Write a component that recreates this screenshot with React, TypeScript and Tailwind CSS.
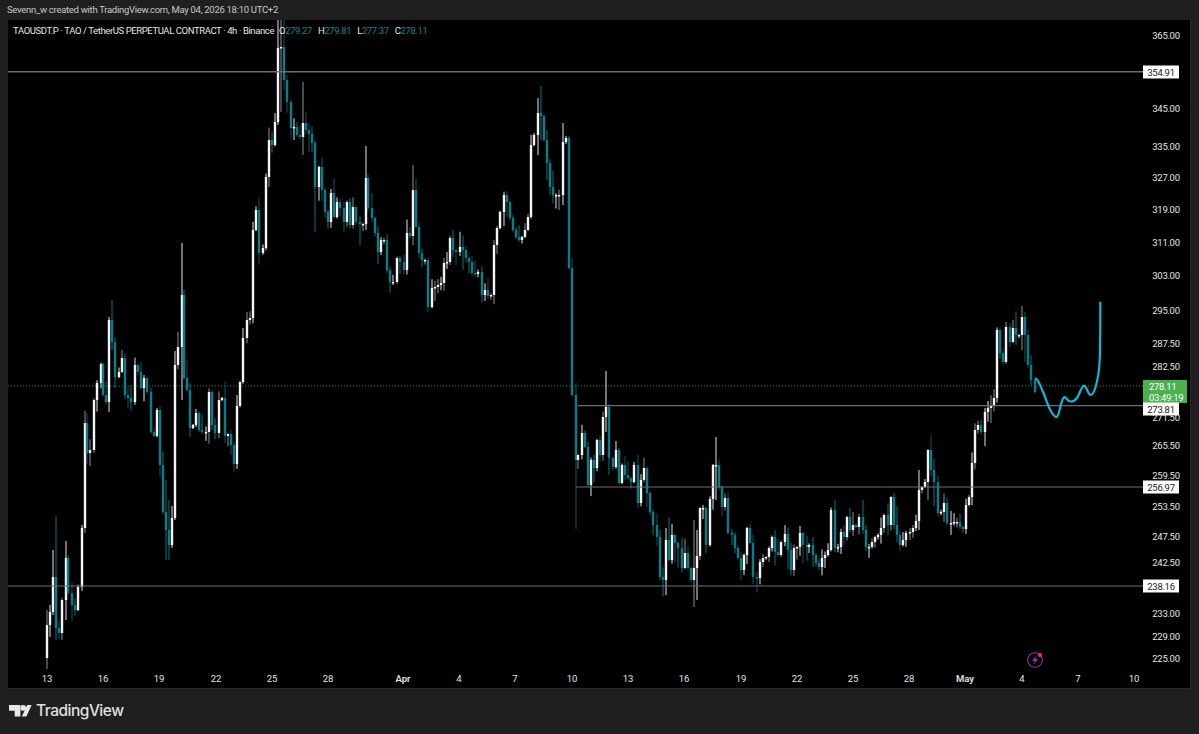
const FONT = "font-['Roboto',sans-serif]";

// candle closes as [x, y] in page pixels, read off the picture
const CLOSES: [number, number][] = [
  [47, 625], [50, 612], [53, 577], [56, 628], [59, 633], [62, 600], [66, 558], [68, 593], [72, 605], [75, 610],
  [78, 587], [82, 528], [85, 423], [87, 453], [90, 450], [94, 400], [97, 383], [101, 364], [103, 395], [106, 402],
  [109, 320], [112, 342], [115, 377], [119, 372], [122, 358], [125, 395], [128, 398], [131, 402], [135, 365], [138, 372],
  [141, 388], [144, 378], [147, 392], [151, 432], [154, 436], [157, 410], [160, 465], [163, 512], [166, 530], [169, 545],
  [172, 518], [175, 365], [178, 347], [182, 295], [184, 378], [187, 390], [190, 428], [193, 425], [196, 413], [199, 430],
  [202, 432], [206, 432], [209, 392], [212, 425], [215, 433], [219, 400], [222, 398], [225, 436], [228, 434], [231, 445],
  [234, 464], [237, 406], [240, 382], [243, 338], [247, 320], [250, 318], [253, 230], [256, 210], [259, 253], [263, 248],
  [266, 177], [269, 140], [272, 145], [275, 122], [278, 48], [281, 47], [284, 80], [287, 102], [291, 128], [294, 127],
  [297, 135], [300, 137], [303, 123], [306, 130], [309, 134], [312, 143], [315, 187], [319, 167], [322, 190], [325, 212],
  [328, 222], [331, 193], [334, 217], [337, 202], [340, 208], [344, 222], [347, 202], [350, 225], [353, 207], [356, 222],
  [360, 224], [363, 224], [366, 178], [368, 208], [372, 218], [375, 233], [378, 252], [381, 240], [384, 240], [387, 270],
  [390, 282], [393, 282], [397, 258], [400, 262], [404, 270], [407, 233], [410, 236], [413, 190], [416, 227], [419, 253],
  [422, 260], [425, 260], [428, 307], [432, 288], [435, 287], [438, 285], [441, 283], [444, 263], [447, 262], [450, 238],
  [453, 250], [456, 252], [460, 247], [463, 250], [466, 258], [469, 262], [472, 273], [475, 274], [478, 272], [482, 295],
  [485, 290], [488, 296], [491, 295], [494, 245], [497, 228], [500, 212], [504, 195], [507, 202], [510, 218], [513, 230],
  [516, 237], [519, 240], [522, 237], [525, 230], [528, 217], [531, 145], [534, 135], [538, 113], [541, 116], [544, 140],
  [547, 163], [550, 187], [553, 195], [556, 195], [559, 195], [563, 142], [566, 138], [569, 268], [572, 395], [576, 460],
  [578, 455], [582, 433], [585, 447], [588, 485], [591, 460], [594, 468], [597, 440], [600, 455], [603, 417], [606, 407],
  [609, 458], [613, 467], [616, 450], [619, 483], [622, 465], [625, 475], [628, 478], [631, 482], [634, 465], [638, 503],
  [641, 480], [644, 468], [647, 493], [650, 512], [653, 525], [657, 537], [660, 577], [663, 580], [666, 540], [669, 560],
  [672, 535], [675, 543], [678, 548], [682, 568], [685, 553], [688, 568], [691, 580], [694, 568], [697, 556], [700, 508],
  [703, 508], [706, 545], [710, 499], [713, 465], [716, 465], [719, 487], [722, 507], [725, 498], [728, 533], [732, 535],
  [735, 548], [738, 558], [741, 570], [744, 555], [747, 528], [750, 543], [753, 577], [757, 578], [760, 562], [763, 558],
  [766, 557], [769, 548], [772, 537], [775, 552], [778, 555], [781, 542], [785, 534], [788, 550], [791, 570], [794, 548],
  [797, 547], [800, 533], [803, 545], [807, 547], [809, 545], [813, 555], [816, 563], [819, 567], [822, 558], [825, 555],
  [828, 550], [831, 510], [835, 548], [838, 547], [841, 532], [844, 537], [847, 517], [850, 530], [853, 525], [856, 527],
  [859, 517], [863, 530], [866, 547], [869, 547], [872, 542], [875, 537], [878, 535], [881, 528], [884, 515], [888, 525],
  [891, 497], [894, 525], [897, 535], [900, 545], [903, 540], [906, 533], [910, 532], [913, 528], [916, 521], [919, 490],
  [922, 487], [925, 482], [928, 450], [931, 470], [934, 482], [938, 513], [941, 512], [944, 503], [947, 523], [951, 523],
  [954, 522], [957, 522], [960, 527], [963, 529], [966, 505], [969, 497], [972, 463], [975, 430], [978, 425], [981, 432],
  [985, 412], [988, 408], [991, 405], [994, 398], [997, 330], [1000, 353], [1003, 362], [1006, 327], [1010, 342], [1013, 328],
  [1016, 335], [1019, 335], [1022, 317], [1025, 335], [1028, 365], [1031, 380], [1035, 392],
];

// long wicks that stand out in the picture: x -> [top y, bottom y]
const SPIKES: Record<number, [number, number]> = {
  47: [610, 669], 53: [550, 615], 56: [516, 640], 66: [541, 620], 109: [317, 412], 112: [300, 350],
  175: [351, 520], 182: [243, 400], 166: [480, 560], 169: [500, 560], 278: [20, 125], 281: [20, 112], 284: [20, 90],
  303: [82, 155], 315: [140, 232], 366: [146, 230], 413: [165, 245], 538: [98, 155], 541: [86, 140],
  563: [123, 205], 576: [383, 529], 606: [371, 432], 694: [520, 607], 716: [437, 500], 919: [470, 530],
  928: [449, 500], 1022: [306, 350], 1025: [312, 362], 697: [530, 600], 666: [528, 595],
};

type Candle = { x: number; top: number; bottom: number; hi: number; lo: number; up: boolean; bright: boolean };

function buildCandles(): Candle[] {
  let seed = 41;
  const rnd = () => {
    seed = (seed * 16807) % 2147483647;
    return seed / 2147483647;
  };
  const out: Candle[] = [];
  CLOSES.forEach(([x, close], i) => {
    const open = i === 0 ? 658 : CLOSES[i - 1][1];
    const up = close <= open;
    const top = Math.min(open, close);
    const bottom = Math.max(open, close, top + 1.5);
    const spike = SPIKES[x];
    const reach = up ? 16 : 24;
    const hi = spike ? spike[0] : top - 1 - rnd() * rnd() * reach;
    const lo = spike ? spike[1] : bottom + 1 + rnd() * rnd() * reach;
    out.push({ x, top, bottom, hi, lo, up, bright: rnd() > 0.4 });
  });
  return out;
}

const CANDLES = buildCandles();

const PRICES: [string, number][] = [
  ["365.00", 35], ["345.00", 108], ["335.00", 146], ["327.00", 177], ["319.00", 209], ["311.00", 242],
  ["303.00", 275], ["295.00", 310], ["287.50", 343], ["282.50", 366], ["271.50", 417], ["265.50", 445],
  ["259.50", 475], ["253.50", 506], ["247.50", 536], ["242.50", 562], ["233.00", 613], ["229.00", 636], ["225.00", 658],
];

const TAGS: [string, number][] = [["354.91", 72], ["273.81", 409], ["256.97", 487], ["238.16", 586]];

const DATES: [string, number][] = [
  ["13", 47], ["16", 103], ["19", 159], ["22", 216], ["25", 272], ["28", 328], ["Apr", 403], ["4", 459], ["7", 515], ["10", 572],
  ["13", 628], ["16", 684], ["19", 741], ["22", 797], ["25", 853], ["28", 909], ["May", 965], ["4", 1022], ["7", 1078], ["10", 1134],
];

function Chart() {
  return (
    <svg viewBox="8 20 1135 652" className="block h-full w-full">
      <line x1="8" x2="1143" y1="386" y2="386" stroke="#2f8a34" strokeWidth="1" strokeDasharray="1 2" />
      {CANDLES.map((c) => (
        <rect
          key={`w${c.x}`}
          x={c.x - 0.5}
          y={c.hi}
          width="1"
          height={c.lo - c.hi}
          fill={c.up ? (c.bright ? "#e4e4e4" : "#8f8f8f") : c.bright ? "#0a7480" : "#075660"}
        />
      ))}
      {CANDLES.map((c) => (
        <rect
          key={`b${c.x}`}
          x={Math.round(c.x) - 1.2}
          y={c.top}
          width="2.4"
          height={c.bottom - c.top}
          fill={c.up ? "#f4f4f4" : "#077f8a"}
        />
      ))}
      <line x1="8" x2="1143" y1="71.7" y2="71.7" stroke="#6e6e6e" strokeWidth="1.4" />
      <line x1="578" x2="1143" y1="405.6" y2="405.6" stroke="#6e6e6e" strokeWidth="1.4" />
      <line x1="576" x2="1143" y1="487" y2="487" stroke="#6e6e6e" strokeWidth="1.2" />
      <line x1="8" x2="1143" y1="586" y2="586" stroke="#6e6e6e" strokeWidth="1.2" />
      <path
        d="M1036 378.7C1039 380 1041 388 1043.5 393C1046 399 1048 406 1050.5 410.5C1052.5 414 1054.5 417.5 1056.7 417C1059.5 416 1060.5 400 1064 397.3C1066 396 1067.5 401.5 1070.5 401.5C1073 401.5 1075.5 400 1077 398C1079.5 394.5 1081.5 386 1084 385.7C1086.5 386 1088 395 1090.7 395C1092.5 395 1094 392 1095.3 388C1098 379 1099.4 370 1099.8 358C1100.2 345 1100.3 320 1100.3 302.5"
        fill="none"
        stroke="#0fb8d6"
        strokeWidth="2.2"
        strokeLinecap="round"
      />
      <circle cx="1035" cy="660" r="7.3" fill="none" stroke="#8e2fa6" strokeWidth="1.1" />
      <path d="M1036.6 655.4 1032 660.8H1034.8L1033.4 664.6 1038 659.2H1035.2Z" fill="#a23cbd" />
      <circle cx="1040" cy="655" r="2" fill="#f23645" />
    </svg>
  );
}

function Logo() {
  return (
    <svg width="24" height="12" viewBox="0 0 24 12" className="shrink-0">
      <path d="M0 0H11.4V11.4H5.7V5.7H0Z" fill="#e6e6e6" />
      <circle cx="14.2" cy="2.9" r="2.9" fill="#e6e6e6" />
      <path d="M18.2 0H22.6L17.4 11.4H12.8Z" fill="#e6e6e6" />
    </svg>
  );
}

export default function App() {
  return (
    <div className={`flex h-[734px] w-[1199px] flex-col overflow-hidden bg-[#1f1f1f] ${FONT}`}>
      <div className="flex h-5 shrink-0 items-center pl-[7px] text-[9.5px] leading-none tracking-[-0.29px] text-[#c8c8c8]">
        Sevenn_w created with TradingView.com, May 04, 2026 18:10 UTC+2
      </div>

      <div className="mx-2 flex h-[669px] shrink-0 flex-col border-b border-r border-[#2a2a2a] bg-black">
        <div className="flex h-[652px] shrink-0">
          <div className="relative w-[1135px] shrink-0">
            <Chart />
            <div className="absolute left-[5px] top-[5px] flex items-center whitespace-nowrap text-[9.5px] leading-[12px] tracking-[-0.4px] text-[#e4e4e4]">
              <span>TAOUSDT.P · TAO / TetherUS PERPETUAL CONTRACT · 4h · Binance</span>
              <span className="ml-[5px]">O</span>
              <span className="text-[#0b8592]">279.27</span>
              <span className="ml-[6px]">H</span>
              <span className="text-[#0b8592]">279.81</span>
              <span className="ml-[6px]">L</span>
              <span className="text-[#0b8592]">277.37</span>
              <span className="ml-[6px]">C</span>
              <span className="text-[#0b8592]">278.11</span>
            </div>
          </div>

          <div className="relative flex-1 text-[9.5px] leading-[13px] tracking-[-0.3px] text-[#e4e4e4]">
            {PRICES.map(([p, y]) => (
              <div key={p} className="absolute left-[5px] w-[36px] -translate-y-1/2 text-center" style={{ top: y - 20 }}>
                {p}
              </div>
            ))}
            <div className="absolute left-0 top-[360px] flex h-[23px] w-[44px] flex-col items-start justify-center bg-[#4caf50] pl-[6px] text-[9.5px] leading-[11px] text-white">
              <span>278.11</span>
              <span>03:49:19</span>
            </div>
            {TAGS.map(([p, y]) => (
              <div
                key={p}
                className="absolute left-0 flex h-[13px] w-[36px] -translate-y-1/2 items-center justify-center bg-white text-[#222]"
                style={{ top: y - 20 }}
              >
                {p}
              </div>
            ))}
          </div>
        </div>

        <div className="relative flex-1 text-[9.5px] text-[#e4e4e4]">
          {DATES.map(([d, x], i) => (
            <span
              key={i}
              className={`absolute top-[1px] -translate-x-1/2 leading-[12px] ${d === "Apr" || d === "May" ? "font-semibold" : ""}`}
              style={{ left: x - 8 }}
            >
              {d}
            </span>
          ))}
        </div>
      </div>

      <div className="flex flex-1 items-center gap-[3.5px] pl-[8.5px] pb-[1px]">
        <Logo />
        <span className="font-['Inter',sans-serif] text-[15.5px] font-medium leading-none tracking-[-0.5px] text-[#e0e0e0]">
          TradingView
        </span>
      </div>
    </div>
  );
}
